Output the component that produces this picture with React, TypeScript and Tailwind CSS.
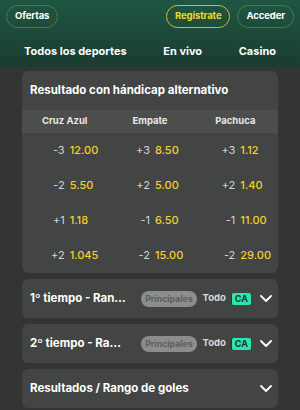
const rows = [
  [
    ['-3', '12.00'],
    ['+3', '8.50'],
    ['+3', '1.12'],
  ],
  [
    ['-2', '5.50'],
    ['+2', '5.00'],
    ['+2', '1.40'],
  ],
  [
    ['+1', '1.18'],
    ['-1', '6.50'],
    ['-1', '11.00'],
  ],
  [
    ['+2', '1.045'],
    ['-2', '15.00'],
    ['-2', '29.00'],
  ],
];

function Chevron() {
  return (
    <svg width="12" height="7" viewBox="0 0 12 7" fill="none" className="shrink-0" aria-hidden="true">
      <path d="M1 1l5 5 5-5" stroke="white" strokeWidth="1.8" strokeLinecap="round" strokeLinejoin="round" />
    </svg>
  );
}

function Collapsed({ title, tags = false }: { title: string; tags?: boolean }) {
  return (
    <div className="flex h-[39px] items-center rounded-md bg-[#424544] pl-[8px] pr-[6px]">
      <p className="min-w-0 flex-1 truncate text-[11.5px] font-bold text-white">{title}</p>
      {tags && (
        <div className="ml-[14px] mr-[9px] flex shrink-0 items-center">
          <span className="rounded-full bg-[#8c8e8d] px-[4px] py-[2px] text-[8.7px] font-bold leading-[12px] text-[#5c5e5d]">
            Principales
          </span>
          <span className="ml-[6px] text-[9.5px] font-bold text-[#d9d9d9]">Todo</span>
          <span className="ml-[5px] rounded-[2px] border-l border-[#5a1d2a] bg-[#2fe3ad] px-[3px] text-[9px] font-bold leading-[12px] text-[#0e3b30]">
            CA
          </span>
        </div>
      )}
      <Chevron />
    </div>
  );
}

export default function App() {
  return (
    <div
      className="h-[410px] w-[300px] overflow-hidden bg-[#333534]"
      style={{ fontFamily: 'Inter, "Open Sans", sans-serif' }}
    >
      <header className="h-[67px] bg-gradient-to-b from-[#1f5742] to-[#1b3b31] px-[6px] pt-[5px]">
        <div className="flex items-center">
          <button className="h-[23px] rounded-full border border-[#4b7564] px-[8px] text-[9.5px] font-bold tracking-[-0.1px] text-white">
            Ofertas
          </button>
          <button className="ml-auto h-[23px] rounded-full border-[1.5px] border-[#d8bb22] px-[8px] text-[9.5px] font-bold tracking-[-0.1px] text-[#f1d72c]">
            Regístrate
          </button>
          <button className="ml-[7px] h-[23px] rounded-full border border-[#4b7564] px-[8px] text-[9.5px] font-bold tracking-[-0.1px] text-white">
            Acceder
          </button>
        </div>
        <nav className="mt-[15px] flex items-center justify-between px-[18px] text-[11px] font-bold text-white">
          <span>Todos los deportes</span>
          <span>En vivo</span>
          <span>Casino</span>
        </nav>
      </header>

      <main className="flex flex-col gap-[6px] px-[22px] pt-[4px]">
        <section className="overflow-hidden rounded-md bg-[#424544]">
          <h2 className="flex h-[39px] items-center px-[8px] text-[11.5px] font-bold text-white">
            Resultado con hándicap alternativo
          </h2>
          <div className="grid h-[23px] grid-cols-3 items-center bg-[#4b4e4d] text-center text-[9.5px] font-bold text-[#e6e6e6]">
            <span>Cruz Azul</span>
            <span>Empate</span>
            <span>Pachuca</span>
          </div>
          {rows.map((row, i) => (
            <div key={i} className="grid h-[35px] grid-cols-3 items-center text-[11px]">
              {row.map(([h, o], j) => (
                <div key={j} className="flex">
                  <span className="w-1/2 text-right text-[#d4d4d4]">{h}</span>
                  <span className="w-1/2 pl-[5px] font-medium text-[#f3d22a]">{o}</span>
                </div>
              ))}
            </div>
          ))}
        </section>
        <Collapsed title="1º tiempo - Rango de goles" tags />
        <Collapsed title="2º tiempo - Rango de goles" tags />
        <Collapsed title="Resultados / Rango de goles" />
      </main>
    </div>
  );
}
